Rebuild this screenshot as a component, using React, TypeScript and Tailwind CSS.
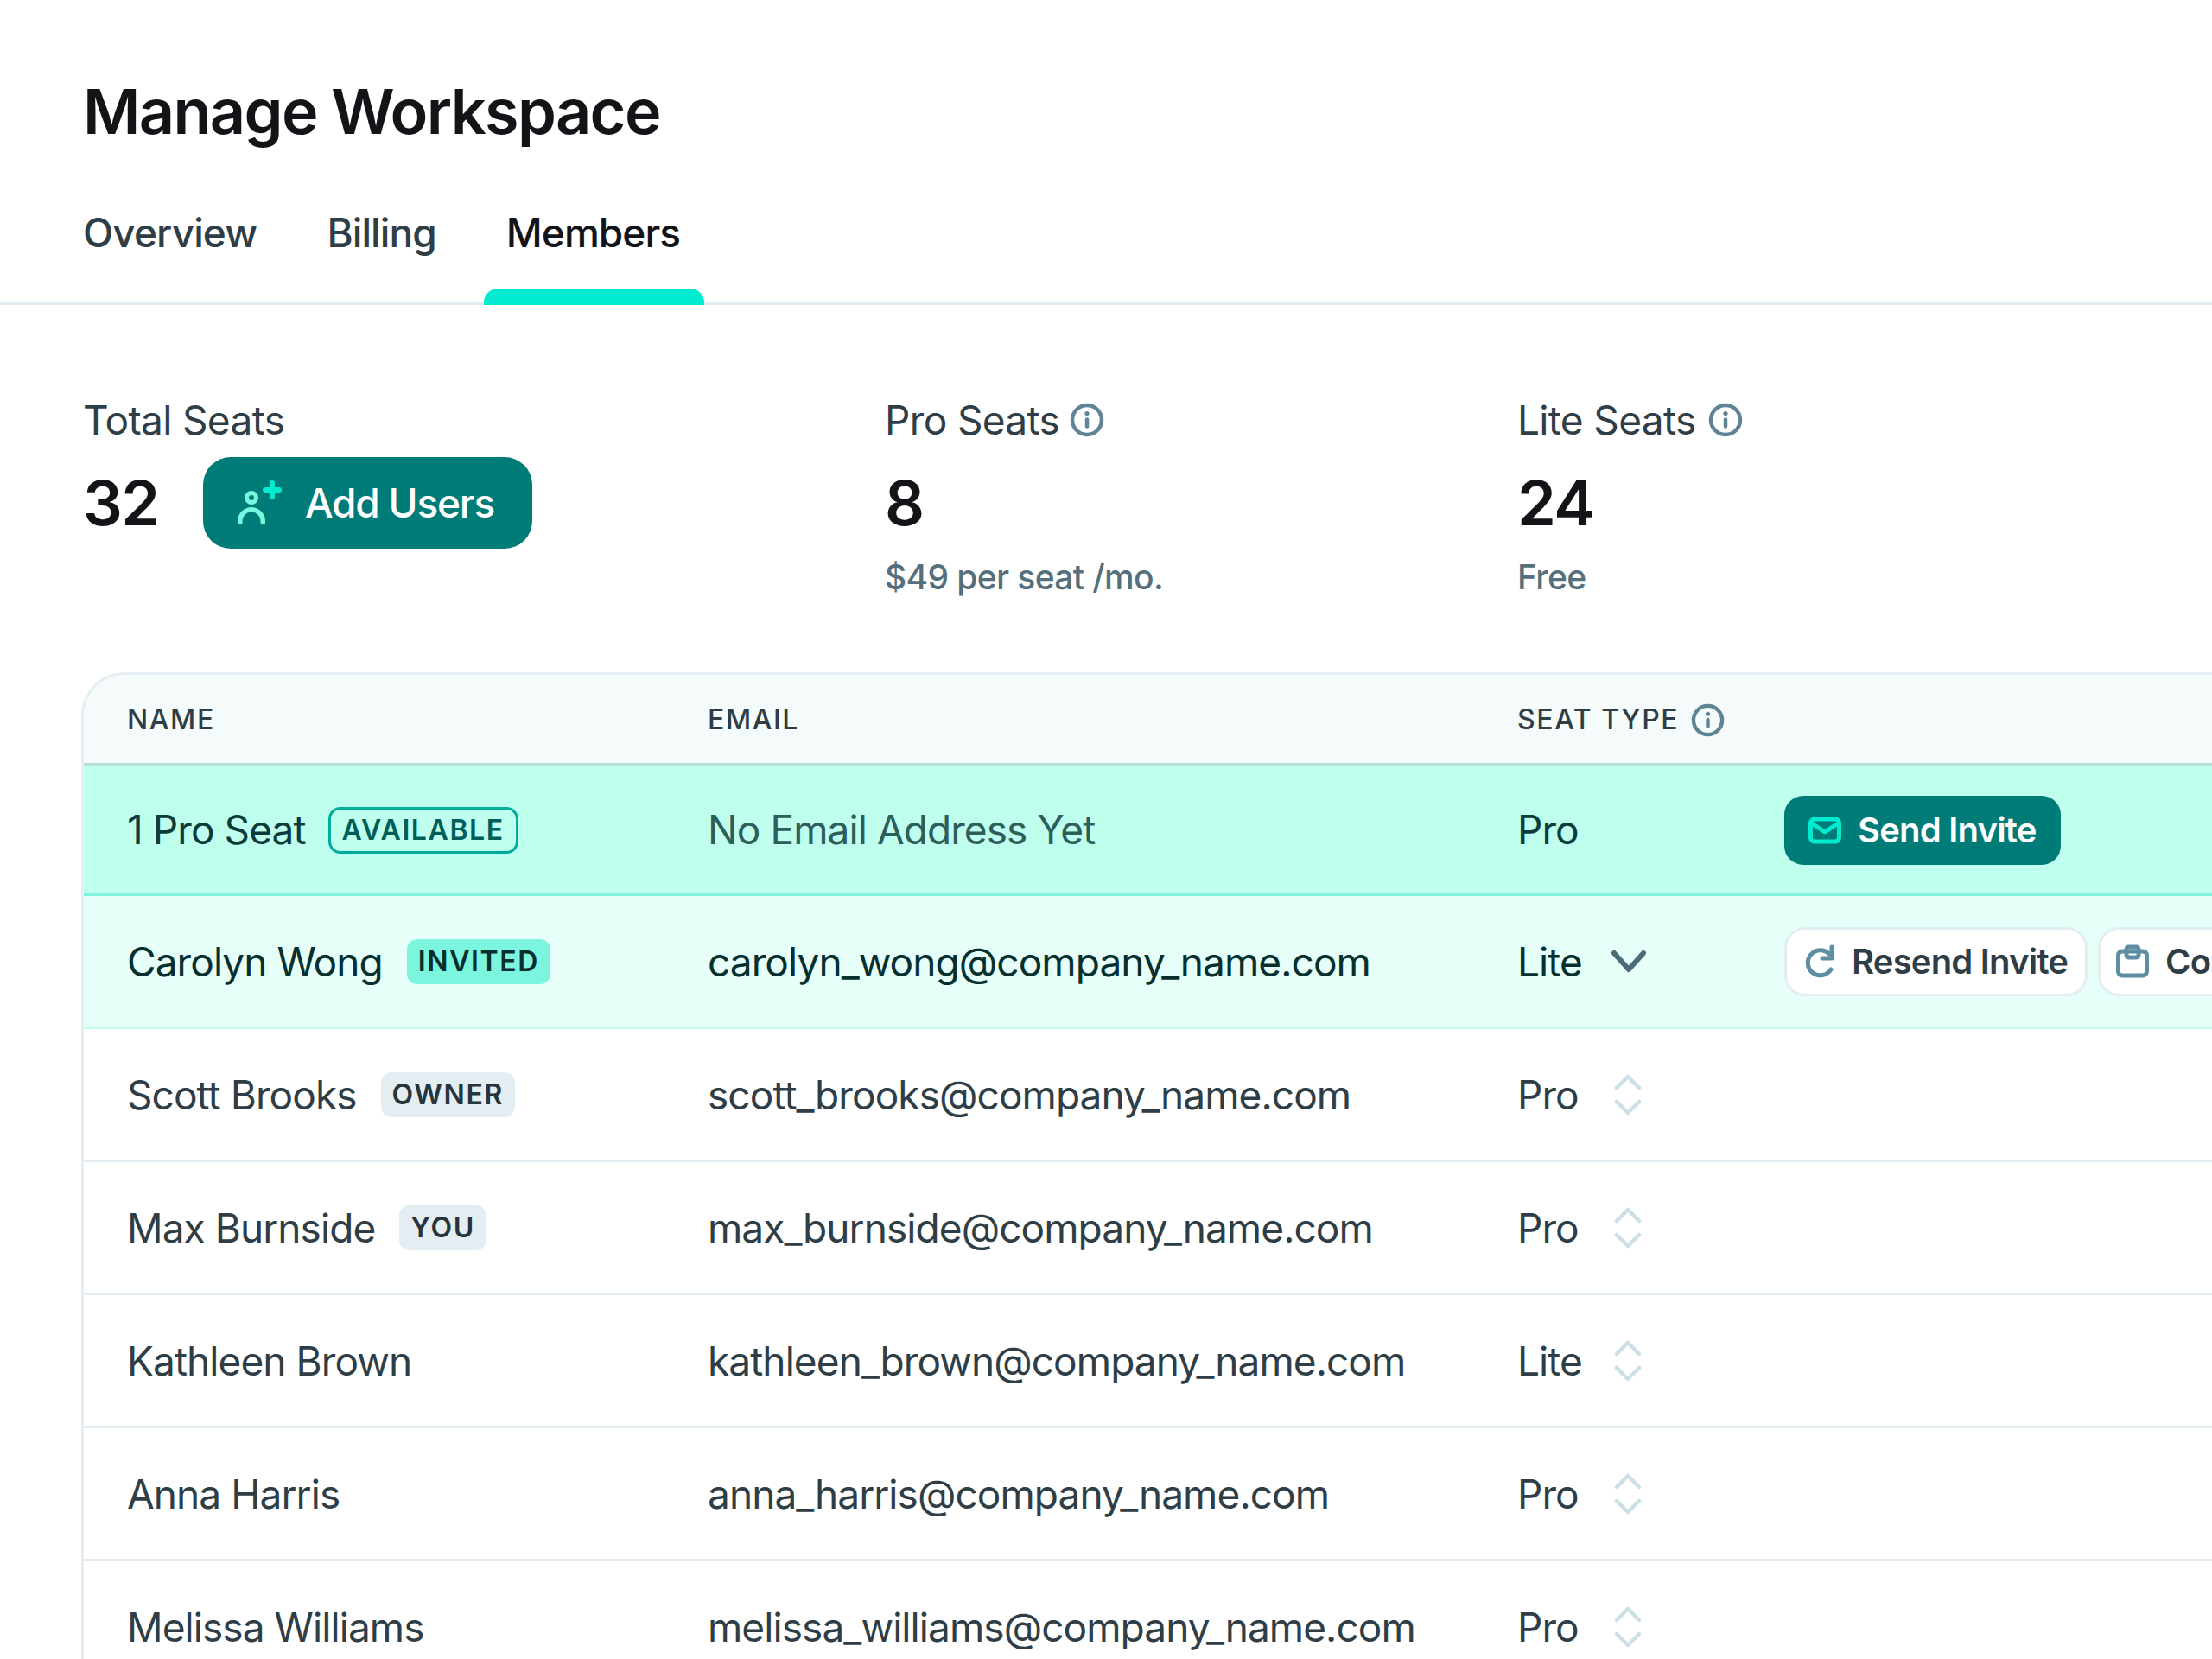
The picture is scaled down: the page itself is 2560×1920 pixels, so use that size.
import type { ReactNode } from 'react'

const members = [
  { name: 'Scott Brooks', tag: 'OWNER', email: 'scott_brooks@company_name.com', seat: 'Pro' },
  { name: 'Max Burnside', tag: 'YOU', email: 'max_burnside@company_name.com', seat: 'Pro' },
  { name: 'Kathleen Brown', email: 'kathleen_brown@company_name.com', seat: 'Lite' },
  { name: 'Anna Harris', email: 'anna_harris@company_name.com', seat: 'Pro' },
  { name: 'Melissa Williams', email: 'melissa_williams@company_name.com', seat: 'Pro' },
]

function InfoIcon({ className }: { className?: string }) {
  return (
    <svg viewBox="0 0 40 40" fill="none" className={className}>
      <circle cx="20" cy="20" r="17" stroke="#5F8496" strokeWidth="4.5" />
      <circle cx="20" cy="12.5" r="2.6" fill="#5F8496" />
      <path d="M20 19.5v8" stroke="#5F8496" strokeWidth="4.5" strokeLinecap="round" />
    </svg>
  )
}

function UpDown() {
  return (
    <svg viewBox="0 0 34 52" fill="none" className="ml-[3px] h-[52px] w-[34px]">
      <path d="M4 18 17 5l13 13M4 34l13 13 13-13" stroke="#CCDFE5" strokeWidth="4.5" strokeLinecap="round" strokeLinejoin="round" />
    </svg>
  )
}

function PersonPlus() {
  return (
    <svg viewBox="0 0 56 56" fill="none" className="h-[56px] w-[56px]">
      <circle cx="16" cy="22" r="5.5" stroke="#7BF5DD" strokeWidth="5" />
      <path d="M2.75 50.5V49a13.25 13.25 0 0 1 26.5 0v1.5" stroke="#7BF5DD" strokeWidth="5.5" strokeLinecap="round" />
      <path d="M40 5v16M32 13h16" stroke="#00EBCF" strokeWidth="6" strokeLinecap="round" />
    </svg>
  )
}

function MailIcon() {
  return (
    <svg viewBox="0 0 40 40" fill="none" className="h-[40px] w-[40px]">
      <rect x="3.5" y="7" width="33" height="26" rx="4.5" stroke="#00EBCF" strokeWidth="5" />
      <path d="m5 12 15 10 15-10" stroke="#00EBCF" strokeWidth="5" strokeLinejoin="round" />
    </svg>
  )
}

function RedoIcon() {
  return (
    <svg viewBox="0 0 40 40" fill="none" className="h-[40px] w-[40px]">
      <path d="M32 29A14.5 14.5 0 1 1 30 11" stroke="#5F8EA3" strokeWidth="5" strokeLinecap="round" />
      <path d="M33 3v13H22" stroke="#5F8EA3" strokeWidth="5" strokeLinecap="round" strokeLinejoin="round" />
    </svg>
  )
}

function ClipIcon() {
  return (
    <svg viewBox="0 0 40 40" fill="none" className="h-[40px] w-[40px]">
      <rect x="3.5" y="8" width="33" height="28" rx="4.5" stroke="#5F8EA3" strokeWidth="5" />
      <rect x="13" y="3" width="14" height="12" rx="2.5" stroke="#5F8EA3" strokeWidth="5" />
    </svg>
  )
}

function Row({ name, email, seat, action, className }: {
  name: ReactNode
  email: ReactNode
  seat: ReactNode
  action?: ReactNode
  className: string
}) {
  return (
    <div className={`flex items-center text-[46px] tracking-[-0.02em] ${className}`}>
      <div className="flex w-[722px] shrink-0 items-center pl-[50px]">{name}</div>
      <div className="w-[937px] shrink-0">{email}</div>
      <div className="flex w-[309px] shrink-0 items-center">{seat}</div>
      {action}
    </div>
  )
}

const tagClass = 'rounded-[12px] px-[13px] text-[32px] leading-[52px] font-semibold tracking-[0.05em]'

export default function App() {
  return (
    <div className="h-[1920px] w-[2560px] overflow-hidden bg-white font-['Inter',sans-serif] text-[#2F3E46]">
      <h1 className="pt-[85px] pl-[96px] text-[72px] leading-[88px] font-semibold tracking-[-0.023em] text-[#121417]">
        Manage Workspace
      </h1>

      {/* Tabs */}
      <div className="mt-[38px] flex h-[142px] gap-[81px] border-b-[3px] border-[#E4EEF2] pl-[96px]">
        <span className="pt-[28px] text-[46px] leading-[60px] font-[550] tracking-[-0.02em]">Overview</span>
        <span className="pt-[28px] text-[46px] leading-[60px] font-[550] tracking-[-0.02em]">Billing</span>
        <div className="relative pt-[28px]">
          <span className="text-[46px] leading-[60px] font-[550] tracking-[-0.02em] text-[#121417]">Members</span>
          <div className="absolute -right-[28px] -bottom-[3px] -left-[26px] h-[19px] rounded-t-[16px] bg-[#00EBCF]" />
        </div>
      </div>

      {/* Seat counts */}
      <div className="flex pt-[105px] pl-[96px]">
        <div className="w-[928px]">
          <div className="text-[46px] leading-[56px] tracking-[-0.014em]">Total Seats</div>
          <div className="mt-[15px] flex items-center">
            <span className="w-[139px] text-[72px] leading-[106px] font-semibold tracking-[-0.02em] text-[#121417]">32</span>
            <button className="flex h-[106px] w-[381px] items-center gap-[22px] rounded-[32px] bg-[#007C78] pl-[40px] text-[46px] font-[550] tracking-[-0.026em] text-white">
              <PersonPlus />
              Add Users
            </button>
          </div>
        </div>
        <div className="w-[732px]">
          <div className="flex items-center gap-[12px] text-[46px] leading-[56px] tracking-[-0.014em]">
            Pro Seats <InfoIcon className="h-[40px] w-[40px]" />
          </div>
          <div className="mt-[15px] text-[72px] leading-[106px] font-semibold tracking-[-0.02em] text-[#121417]">8</div>
          <div className="mt-[7px] text-[39px] leading-[52px] font-[550] tracking-[-0.016em] text-[#55707C]">$49 per seat /mo.</div>
        </div>
        <div>
          <div className="flex items-center gap-[14px] text-[46px] leading-[56px] tracking-[-0.014em]">
            Lite Seats <InfoIcon className="h-[40px] w-[40px]" />
          </div>
          <div className="mt-[15px] text-[72px] leading-[106px] font-semibold tracking-[-0.02em] text-[#121417]">24</div>
          <div className="mt-[7px] text-[39px] leading-[52px] font-[550] tracking-[-0.016em] text-[#55707C]">Free</div>
        </div>
      </div>

      {/* Table */}
      <div className="mt-[84px] ml-[94px] w-[2600px] overflow-hidden rounded-tl-[50px] border-t-[3px] border-l-[3px] border-[#E4EEF2]">
        <div className="flex h-[106px] items-center border-b-[4px] border-[#B8E0DA] bg-[#F5FAFA] pt-[2px] text-[32px] font-[550] tracking-[0.05em]">
          <div className="w-[722px] pl-[50px]">NAME</div>
          <div className="w-[937px]">EMAIL</div>
          <div className="flex items-center gap-[14px]">
            SEAT TYPE <InfoIcon className="h-[39px] w-[39px]" />
          </div>
        </div>

        <Row
          className="h-[150px] border-b-[3px] border-[#80F2DE] bg-[#BFFFEE] text-[#0B3B3B]"
          name={
            <>
              1 Pro Seat
              <span className="ml-[26px] rounded-[14px] border-[3px] border-[#00AC9C] px-[13px] text-[32px] leading-[48px] font-semibold tracking-[0.05em] text-[#005E59]">
                AVAILABLE
              </span>
            </>
          }
          email={<span className="text-[#2E5E5C]">No Email Address Yet</span>}
          seat="Pro"
          action={
            <button className="flex h-[80px] w-[320px] items-center gap-[18px] rounded-[22px] bg-[#007C78] pl-[27px] text-[40px] font-semibold tracking-[-0.02em] text-white">
              <MailIcon />
              Send Invite
            </button>
          }
        />

        <Row
          className="h-[154px] border-b-[3px] border-[#BFFFEE] bg-[#E6FFF8] pt-[1px] text-[#06302F]"
          name={
            <>
              Carolyn Wong
              <span className={`ml-[28px] bg-[#7BF5DD] ${tagClass}`}>INVITED</span>
            </>
          }
          email="carolyn_wong@company_name.com"
          seat={
            <>
              <span className="w-[108px]">Lite</span>
              <svg viewBox="0 0 42 28" fill="none" className="h-[28px] w-[42px]">
                <path d="m4 4 17 19L38 4" stroke="#4B6B78" strokeWidth="6" strokeLinecap="round" strokeLinejoin="round" />
              </svg>
            </>
          }
          action={
            <div className="flex gap-[12px]">
              <button className="flex h-[80px] w-[351px] items-center gap-[16px] rounded-[24px] border-[3px] border-[#E4EEF2] bg-white pl-[19px] text-[40px] font-semibold tracking-[-0.02em] text-[#2F3E46]">
                <RedoIcon />
                Resend Invite
              </button>
              <button className="flex h-[80px] w-[300px] items-center gap-[18px] rounded-[24px] border-[3px] border-[#E4EEF2] bg-white pl-[17px] text-[40px] font-semibold tracking-[-0.02em] text-[#2F3E46]">
                <ClipIcon />
                Copy Link
              </button>
            </div>
          }
        />

        {members.map((m) => (
          <Row
            key={m.name}
            className="h-[154px] border-b-[3px] border-[#E4EEF2] pt-[1px]"
            name={
              <>
                {m.name}
                {m.tag && <span className={`ml-[28px] bg-[#E4EEF2] text-[#26343B] ${tagClass}`}>{m.tag}</span>}
              </>
            }
            email={m.email}
            seat={
              <>
                <span className="w-[108px]">{m.seat}</span>
                <UpDown />
              </>
            }
          />
        ))}
      </div>
    </div>
  )
}
